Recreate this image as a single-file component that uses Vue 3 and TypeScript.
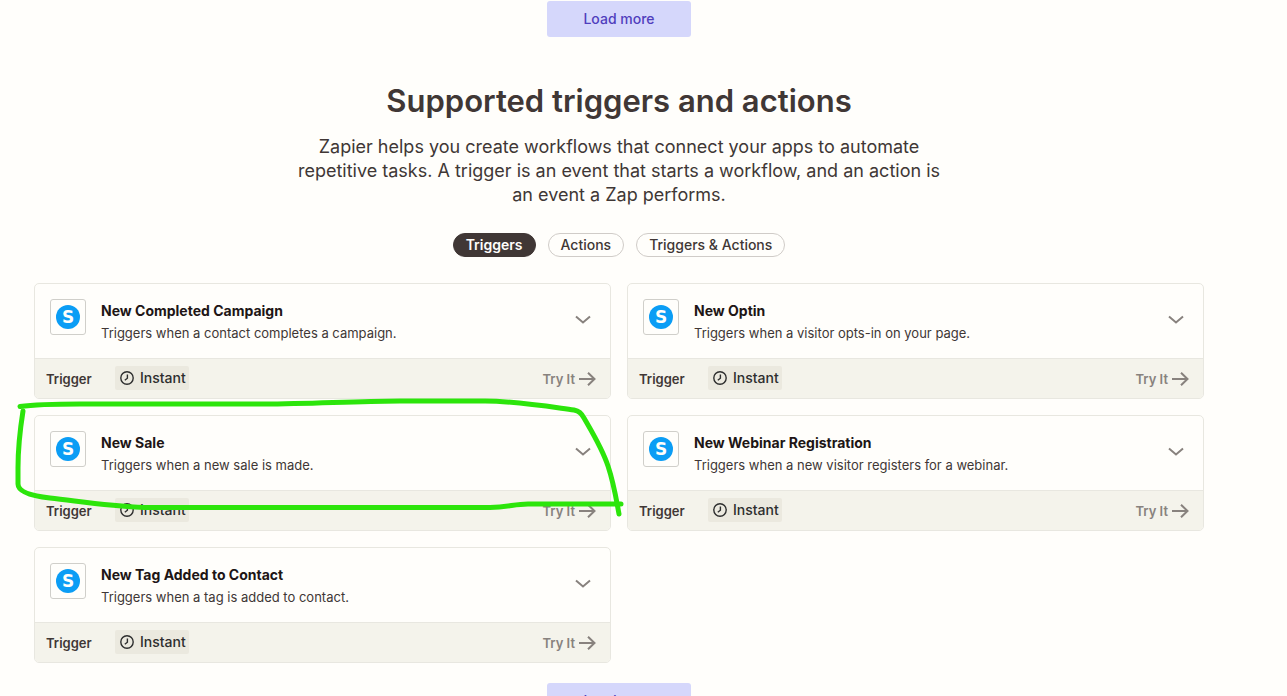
<script setup lang="ts">
import { ref } from 'vue'

interface ZapEvent {
  title: string
  description: string
}

const tabs: string[] = ['Triggers', 'Actions', 'Triggers & Actions']
const activeTab = ref<string>('Triggers')

const events: ZapEvent[] = [
  { title: 'New Completed Campaign', description: 'Triggers when a contact completes a campaign.' },
  { title: 'New Optin', description: 'Triggers when a visitor opts-in on your page.' },
  { title: 'New Sale', description: 'Triggers when a new sale is made.' },
  { title: 'New Webinar Registration', description: 'Triggers when a new visitor registers for a webinar.' },
  { title: 'New Tag Added to Contact', description: 'Triggers when a tag is added to contact.' },
]
</script>

<template>
  <main class="page">
    <button type="button" class="load-more">Load more</button>

    <section class="supported">
      <h2 class="heading">Supported triggers and actions</h2>
      <p class="intro">
        Zapier helps you create workflows that connect your apps to automate repetitive tasks. A
        trigger is an event that starts a workflow, and an action is an event a Zap performs.
      </p>

      <div class="tabs">
        <button
          v-for="tab in tabs"
          :key="tab"
          type="button"
          class="tab"
          :class="{ active: tab === activeTab }"
          :aria-pressed="tab === activeTab"
          @click="activeTab = tab"
        >
          {{ tab }}
        </button>
      </div>

      <div class="grid">
        <article v-for="event in events" :key="event.title" class="card">
          <div class="card-main">
            <span class="logo">
              <svg width="24" height="24" viewBox="0 0 24 24" aria-hidden="true">
                <circle cx="12" cy="12" r="12" fill="#0b9df5" />
                <text class="logo-letter" x="12" y="18" text-anchor="middle">S</text>
              </svg>
            </span>
            <div class="card-text">
              <h3 class="card-title">{{ event.title }}</h3>
              <p class="card-description">{{ event.description }}</p>
            </div>
            <button type="button" class="expand" :aria-label="`Show details of ${event.title}`">
              <svg width="16" height="10" viewBox="0 0 16 10" aria-hidden="true">
                <path d="M1 1.5 L8 7.5 L15 1.5" fill="none" stroke="#88827e" stroke-width="2" />
              </svg>
            </button>
          </div>
          <div class="card-footer">
            <span class="kind">Trigger</span>
            <span class="badge">
              <svg width="14" height="14" viewBox="0 0 14 14" fill="none" stroke="#2d2e2e" aria-hidden="true">
                <circle cx="7" cy="7" r="6.2" stroke-width="1.4" />
                <path d="M7.4 3.4 V7.2 L4.8 9.2" stroke-width="1.4" />
              </svg>
              Instant
            </span>
            <a href="#" class="try">
              Try It
              <svg width="17" height="14" viewBox="0 0 17 14" fill="none" stroke="#88827e" stroke-width="2" aria-hidden="true">
                <path d="M0 7 H15.5 M9 0.7 L15.5 7 L9 13.3" />
              </svg>
            </a>
          </div>
        </article>

        <svg class="marker" width="620" height="130" viewBox="10 392 620 130" aria-hidden="true">
          <path
            d="M20 406.5 C38 404 55 404 80 404 H270 C330 403 370 401 400 401 H485 C515 401 545 406 574 410 C579 411 581 413 584 418 C592 432 602 448 608 466 C614 484 616 498 619 514"
          />
          <path
            d="M23 411 C20 430 18 450 18 468 V484 C18 492 32 496 50 498 C78 501 105 506 145 507.500 H490 C508 507.500 514 504 528 504 H621"
          />
        </svg>
      </div>
    </section>

    <button type="button" class="load-more">Load more</button>
  </main>
</template>

<style>
html {
  background: #fffefb;
  scrollbar-width: none;
}
</style>

<style scoped>
.page {
  display: flex;
  flex-direction: column;
  align-items: center;
  padding: 1px 83px 0 34px;
  background: #fffefb;
  color: #403735;
  font-family: Inter, "Liberation Sans", sans-serif;
}

.load-more {
  width: 144px;
  height: 36px;
  flex: none;
  padding: 0;
  border: 0;
  border-radius: 3px;
  background: #d5d7fb;
  color: #503ebd;
  font: 500 14px/20px Inter, "Liberation Sans", sans-serif;
  cursor: pointer;
}

.supported {
  display: flex;
  flex-direction: column;
  align-items: center;
  align-self: stretch;
  padding: 44px 0 20px;
}

.heading {
  margin: 0 0 14px;
  font-size: 31px;
  font-weight: 600;
  line-height: 40px;
}

.intro {
  max-width: 660px;
  margin: 0;
  font-size: 18px;
  line-height: 24px;
  text-align: center;
}

.tabs {
  display: flex;
  gap: 12px;
  margin: 26px 0;
}

.tab {
  height: 24px;
  padding: 0 12px;
  border: 1px solid #d0ccc8;
  border-radius: 12px;
  background: #fffefb;
  color: #403735;
  font: 500 14px/20px Inter, "Liberation Sans", sans-serif;
  cursor: pointer;
}

.tab.active {
  border-color: #403735;
  background: #403735;
  color: #fffefb;
  font-weight: 600;
}

.grid {
  position: relative;
  display: grid;
  grid-template-columns: repeat(2, minmax(0, 1fr));
  gap: 16px;
  align-self: stretch;
}

.card {
  overflow: hidden;
  border: 1px solid #e8e7e0;
  border-radius: 5px;
}

.card-main {
  display: flex;
  align-items: flex-start;
  padding: 15px 19px 15px 15px;
}

.logo {
  display: flex;
  align-items: center;
  justify-content: center;
  width: 34px;
  height: 34px;
  flex: none;
  border: 1px solid #d0cfca;
  border-radius: 3px;
}

.logo-letter {
  fill: #fffefb;
  font: 700 17px "DejaVu Sans", sans-serif;
}

.card-text {
  flex: 1;
  min-width: 0;
  padding-left: 15px;
}

.card-title {
  margin: 2px 0;
  color: #201515;
  font-size: 14px;
  font-weight: 700;
  line-height: 20px;
}

.card-description {
  margin: 0;
  font-size: 13px;
  line-height: 20px;
}

.expand {
  display: flex;
  align-self: center;
  padding: 0 0 2px;
  border: 0;
  background: none;
  cursor: pointer;
}

.card-footer {
  display: flex;
  align-items: center;
  height: 39px;
  padding: 0 14px 0 11px;
  border-top: 1px solid #e8e7e0;
  background: #f4f3eb;
  font-size: 13px;
  font-weight: 600;
}

.kind {
  width: 69px;
}

.badge {
  display: flex;
  align-items: center;
  gap: 6px;
  height: 24px;
  margin-bottom: 2px;
  padding: 0 3px 0 5px;
  border-radius: 2px;
  background: #ebe9df;
  color: #2d2e2e;
  font-size: 14px;
  font-weight: 500;
}

.try {
  display: flex;
  align-items: center;
  gap: 4px;
  margin-left: auto;
  color: #88827e;
  text-decoration: none;
}

.marker {
  position: absolute;
  top: 109px;
  left: -24px;
  pointer-events: none;
}

.marker path {
  fill: none;
  stroke: #2ce50b;
  stroke-width: 5px;
  stroke-linecap: round;
  stroke-linejoin: round;
}
</style>
